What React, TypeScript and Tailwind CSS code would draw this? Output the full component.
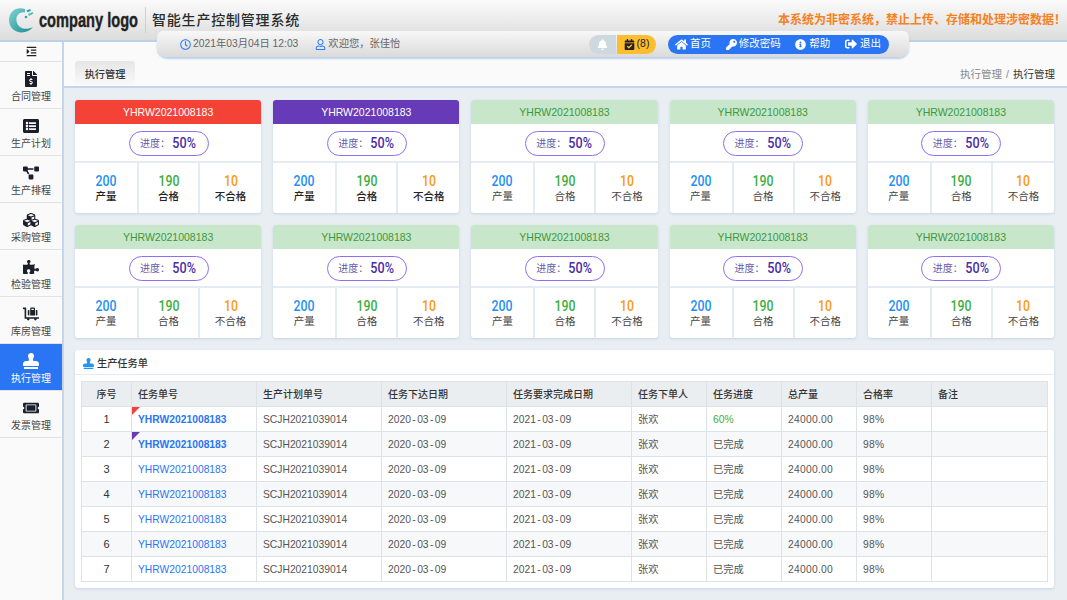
import { FaBell, FaCalendarCheck, FaCubes, FaFileInvoiceDollar, FaHome, FaIndent, FaInfoCircle, FaKey, FaListAlt, FaLuggageCart, FaProjectDiagram, FaPuzzlePiece, FaRegClock, FaRegUser, FaSignOutAlt, FaStamp, FaTicketAlt } from "react-icons/fa";

const font = "font-['Liberation_Sans','Noto_Sans_CJK_SC',sans-serif]";

const menus = [
  { name: "合同管理", icon: FaFileInvoiceDollar },
  { name: "生产计划", icon: FaListAlt },
  { name: "生产排程", icon: FaProjectDiagram },
  { name: "采购管理", icon: FaCubes },
  { name: "检验管理", icon: FaPuzzlePiece },
  { name: "库房管理", icon: FaLuggageCart },
  { name: "执行管理", icon: FaStamp, active: true },
  { name: "发票管理", icon: FaTicketAlt },
];

const headCols = ["序号", "任务单号", "生产计划单号", "任务下达日期", "任务要求完成日期", "任务下单人", "任务进度", "总产量", "合格率", "备注"];
const gridCols = "grid grid-cols-[50px_125px_125px_125px_125px_75px_75px_75px_75px_1fr]";

const Logo = () => (
  <svg width="26" height="26" viewBox="0 0 26 26" className="shrink-0">
    <defs>
      <linearGradient id="lg" x1="0" y1="0" x2="1" y2="1">
        <stop offset="0" stopColor="#7fd6d0" />
        <stop offset="1" stopColor="#178a90" />
      </linearGradient>
    </defs>
    <path d="M17 2 C9 -1 1 4 1 13 C1 22 9 27 17 25 C20 24.3 23 22.5 25 20 C20 23 10 23 8.5 14 C7.6 8 12 4.5 17 5.5 Z" fill="url(#lg)" />
    <path d="M18.5 3.5 L22 2 L23 3.5 L19.5 5.5 Z" fill="#2aa3a5" />
    <path d="M20 7 L24.5 5 L25.5 6.5 L21 9 Z" fill="#55bdbb" />
    <circle cx="18" cy="10" r="1.3" fill="#2aa3a5" />
  </svg>
);

const Header = () => (
  <header className="relative h-[42px] shrink-0 border-b-2 border-[#bcd0ea] bg-gradient-to-b from-[#fbfbfb] to-[#dcdcdc]">
    <div className="flex h-10 items-center pl-[8px]">
      <Logo />
      <span className="ml-[5px] inline-block w-[100px] origin-left scale-x-[0.73] whitespace-nowrap text-[20px] font-bold leading-none text-[#222] [-webkit-text-stroke:0.4px_#222]">company logo</span>
      <span className="ml-[6px] h-[26px] w-px bg-[#cfcfcf]" />
      <span className="ml-[6px] text-sm font-medium tracking-[0.8px] text-[#2b2b2b]">智能生产控制管理系统</span>
      <span className="ml-auto pr-[1px] text-[12px] font-bold text-[#f5811f]">本系统为非密系统，禁止上传、存储和处理涉密数据！</span>
    </div>
    <div className="absolute left-[157px] top-[31px] flex h-[26px] w-[752px] items-center rounded-b-[10px] rounded-t-[6px] bg-gradient-to-b from-[#f8f8f8] to-[#dadada] pl-[23px] pr-[20px] text-[10.3px] text-[#666] shadow-[0_2px_2px_#bcd0ea]">
      <FaRegClock className="text-[11px] text-[#2f7cf6]" />
      <span className="ml-[2px]">2021年03月04日 12:03</span>
      <FaRegUser className="ml-[17px] text-[11px] text-[#2f7cf6]" />
      <span className="ml-[2px]">欢迎您，张佳怡</span>
      <div className="ml-auto flex h-[19px] items-center">
        <span className="flex h-full w-[27px] items-center justify-center rounded-l-full bg-[#ced8df] text-[11px] text-white"><FaBell /></span>
        <span className="ml-px flex h-full w-[39px] items-center justify-center gap-[2px] rounded-r-full bg-[#fdbd2e] text-[10.5px] text-[#222]"><FaCalendarCheck className="text-[11px]" />(8)</span>
        <div className="ml-[12px] flex h-full w-[221px] items-center justify-between rounded-full bg-[#2a75f3] pl-[7px] pr-[8px] text-[10.5px] text-white">
          <span className="flex items-center gap-[2px]"><FaHome className="text-[13px]" />首页</span>
          <span className="flex items-center gap-[2px]"><FaKey className="text-[11px]" />修改密码</span>
          <span className="flex items-center gap-[3px]"><FaInfoCircle className="text-[11px]" />帮助</span>
          <span className="flex items-center gap-[3px]"><FaSignOutAlt className="text-[12px]" />退出</span>
        </div>
      </div>
    </div>
  </header>
);

const Sidebar = () => (
  <aside className="w-[64px] shrink-0 border-r-2 border-[#c5d6ec] bg-[#fafafa]">
    <div className="flex h-[20px] items-center justify-center border-b border-[#e2e2e2] text-[11px] text-[#222]"><FaIndent /></div>
    {menus.map((m) => (
      <div key={m.name} className={`flex h-[47px] flex-col items-center justify-center border-b border-[#e2e2e2] pt-[4px] ${m.active ? "bg-[#2a75f3] text-white" : "text-[#444]"}`}>
        <m.icon className={`text-[16px] ${m.active ? "text-white" : "text-[#1b1f2a]"}`} />
        <span className="mt-[3px] text-[10px] leading-[14px]">{m.name}</span>
      </div>
    ))}
  </aside>
);

const Stat = ({ value, label, color, bold, width }: { value: number; label: string; color: string; bold: boolean; width: string }) => (
  <div className={`flex flex-col items-center justify-center border-l-2 border-[#e4ebf3] first:border-l-0 ${width}`}>
    <span className={`inline-block scale-x-[0.88] font-['Roboto',sans-serif] text-[14px] font-medium leading-[16px] ${color}`}>{value}</span>
    <span className={`text-[10.5px] leading-[14px] ${bold ? "font-medium text-[#222]" : "text-[#444]"}`}>{label}</span>
  </div>
);

const Card = ({ head, title, bold }: { head: string; title: string; bold: boolean }) => (
  <div className="h-[113px] overflow-hidden rounded-[3px] bg-white shadow-[0_1px_3px_#c5d3e5]">
    <div className={`flex h-[24px] items-center justify-center pt-[1px] text-[10.5px] ${head} ${title}`}>YHRW2021008183</div>
    <div className="flex h-[39px] items-center justify-center border-b-2 border-[#e4ebf3] pl-[1px] pt-[2px]">
      <div className="flex h-[25px] w-[80px] items-center justify-center rounded-full border border-[#8f6ff0] text-[10px] text-[#6a5aa8]">
        进度：<span className="ml-[1px] inline-block scale-x-[0.9] font-['Roboto',sans-serif] text-[14px] font-medium text-[#4a2ca8]">50%</span>
      </div>
    </div>
    <div className="flex h-[50px]">
      <Stat value={200} label="产量" color="text-[#1e90f5]" bold={bold} width="w-[62px]" />
      <Stat value={190} label="合格" color="text-[#3cae3c]" bold={bold} width="w-[61px]" />
      <Stat value={10} label="不合格" color="text-[#fb9a0e]" bold={bold} width="flex-1" />
    </div>
  </div>
);

// hyphens in the reference's dates are wider than Liberation's
const DateText = ({ value }: { value: string }) => (
  <>
    {value.split("-").map((part, i) => (
      <span key={i}>
        {i > 0 && <span className="px-[1.4px]">-</span>}
        {part}
      </span>
    ))}
  </>
);

const Row = ({ n }: { n: number }) => (
  <div className={`${gridCols} h-[25px] border-b border-[#dde2e6] text-[10.3px] leading-[25px] text-[#555] ${n % 2 === 0 ? "bg-[#f6f8f9]" : "bg-white"}`}>
    <div className="border-r border-[#dde2e6] text-center text-[11px] font-medium text-[#333]">{n}</div>
    <div className="relative border-r border-[#dde2e6] pl-[6px] text-[#2a75f3]">
      {n === 1 && <span className="absolute left-0 top-0 border-r-[8px] border-t-[8px] border-r-transparent border-t-[#f44336]" />}
      {n === 2 && <span className="absolute left-0 top-0 border-r-[8px] border-t-[8px] border-r-transparent border-t-[#673ab7]" />}
      <span className={n <= 2 ? "font-bold" : ""}>YHRW2021008183</span>
    </div>
    <div className="border-r border-[#dde2e6] pl-[6px]">SCJH2021039014</div>
    <div className="border-r border-[#dde2e6] pl-[6px]"><DateText value="2020-03-09" /></div>
    <div className="border-r border-[#dde2e6] pl-[6px]"><DateText value="2021-03-09" /></div>
    <div className="border-r border-[#dde2e6] pl-[6px]">张欢</div>
    <div className={`border-r border-[#dde2e6] pl-[6px] ${n === 1 ? "font-medium text-[#3cae3c]" : ""}`}>{n === 1 ? "60%" : "已完成"}</div>
    <div className="border-r border-[#dde2e6] pl-[6px] tracking-[0.25px]">24000.00</div>
    <div className="border-r border-[#dde2e6] pl-[6px] tracking-[0.25px]">98%</div>
    <div />
  </div>
);

export default function App() {
  const cards = Array.from({ length: 10 }, (_, i) => i);
  return (
    <div className={`flex h-[600px] w-[1067px] flex-col overflow-hidden bg-[#e9eef3] ${font}`}>
      <Header />
      <div className="flex min-h-0 flex-1">
        <Sidebar />
        <main className="min-w-0 flex-1">
          <div className="flex h-[46px] items-end justify-between border-b-2 border-[#c5d6ec] bg-[#fafafa] pl-[11px] pr-[12px]">
            <div className="flex h-[25px] w-[60px] items-center justify-center rounded-t-[3px] bg-gradient-to-b from-[#e6e6e6] to-[#fafafa] pt-[2px] text-[10.2px] font-medium text-[#333]">执行管理</div>
            <div className="pb-[3px] text-[10.5px] text-[#888]">执行管理<span className="mx-[4px]">/</span><span className="text-[#333]">执行管理</span></div>
          </div>
          <div className="pl-[11px] pr-[13px] pt-[12px]">
            <div className="grid grid-cols-5 gap-x-[12px] gap-y-[12px]">
              {cards.map((i) => (
                <Card
                  key={i}
                  bold={i < 2}
                  head={i === 0 ? "bg-[#f44336]" : i === 1 ? "bg-[#673ab7]" : "bg-[#c8e6c9]"}
                  title={i < 2 ? "text-white" : "text-[#3a9a3e]"}
                />
              ))}
            </div>
            <section className="mt-[12px] h-[238px] rounded-[3px] bg-white shadow-[0_1px_3px_#c5d3e5]">
              <div className="flex h-[25px] items-center gap-[3px] border-b border-[#e4ebf3] pl-[8px] pt-[3px] text-[10.2px] font-medium text-[#333]">
                <FaStamp className="text-[11px] text-[#2196f3]" />生产任务单
              </div>
              <div className="mx-[6px] mt-[6px] w-[967px] border-x border-t border-[#dde2e6]">
                <div className={`${gridCols} h-[25px] border-b border-[#dde2e6] bg-[#ebeef1] text-[10px] font-medium leading-[25px] text-[#333]`}>
                  {headCols.map((h, i) => (
                    <div key={h} className={`${i === 0 ? "text-center" : "pl-[6px]"} ${i < 9 ? "border-r border-[#dde2e6]" : ""}`}>{h}</div>
                  ))}
                </div>
                {[1, 2, 3, 4, 5, 6, 7].map((n) => (
                  <Row key={n} n={n} />
                ))}
              </div>
            </section>
          </div>
        </main>
      </div>
    </div>
  );
}
